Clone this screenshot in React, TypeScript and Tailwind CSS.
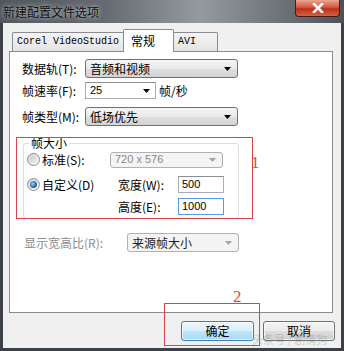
import React from "react";

function Arrow({ color = "#000" }: { color?: string }) {
  return (
    <svg width="7" height="4" viewBox="0 0 7 4" className="shrink-0">
      <path d="M0 0H7L3.5 4Z" fill={color} />
    </svg>
  );
}

function Combo({ className, children }: { className: string; children: React.ReactNode }) {
  return <div className={className}>{children}</div>;
}

function Radio({ checked }: { checked?: boolean }) {
  return (
    <div className="w-[13px] h-[13px] shrink-0 rounded-full border border-[#8e8f8f] bg-[linear-gradient(135deg,#d0d0d0,#fbfbfb)] flex items-center justify-center">
      {checked ? (
        <div className="w-[7px] h-[7px] rounded-full bg-[radial-gradient(circle_at_40%_40%,#9fd4f7,#2a6cab_55%,#1b4f82)]" />
      ) : (
        <div className="w-[7px] h-[7px] rounded-full bg-[linear-gradient(135deg,#c9c9c9,#f2f2f2)]" />
      )}
    </div>
  );
}

export default function App() {
  return (
    <div className="relative w-[344px] h-[351px] overflow-hidden bg-[#3b4147] flex flex-col font-['Noto_Sans_CJK_SC',sans-serif] text-[12px] text-black leading-none">
      {/* title bar */}
      <div className="h-[23px] shrink-0 flex items-center pl-[3px] bg-[linear-gradient(90deg,#50565c_0%,#646a70_30%,#959aa0_58%,#6c7278_82%,#4c5258_100%)]">
        <span className="text-[12px] leading-none text-[#111] [text-shadow:0_0_5px_rgba(255,255,255,0.85)]">
          新建配置文件选项
        </span>
      </div>

      {/* body */}
      <div className="mx-[3px] mb-[3px] flex-1 bg-[#f0f0f0] flex flex-col pt-[6px]">
        <div className="ml-[6px] w-[324px] flex flex-col">
          {/* tabs */}
          <div className="flex items-end h-[22px] pl-[3px]">
            <div className="w-[111px] h-[19px] border-t border-l border-[#898c95] rounded-tl-[2px] bg-[linear-gradient(#f5f5f5,#e4e4e4)] flex items-center pl-[4px] font-['Liberation_Mono',monospace] text-[10px]">
              Corel VideoStudio
            </div>
            <div className="relative z-10 -mb-px w-[51px] h-[23px] border-t border-l border-r border-[#898c95] rounded-t-[2px] bg-white flex items-center pl-[7px] pb-[1px]">
              常规
            </div>
            <div className="w-[44px] h-[19px] border-t border-r border-[#898c95] rounded-tr-[2px] bg-[linear-gradient(#f5f5f5,#e4e4e4)] flex items-center pl-[4px] font-['Liberation_Mono',monospace] text-[10px]">
              AVI
            </div>
          </div>

          {/* panel */}
          <div className="h-[262px] border border-[#898c95] bg-white flex flex-col pt-[7px]">
            <div className="flex items-center h-[19px] pl-[12px]">
              <span className="w-[63px]">数据轨(T):</span>
              <Combo className="w-[153px] h-[19px] rounded-[3px] border border-[#707070] bg-[linear-gradient(#f6f6f6,#e9e9e9_50%,#dedede_52%,#d3d3d3)] flex items-center justify-between pl-[4px] pr-[6px]">
                <span>音频和视频</span>
                <Arrow />
              </Combo>
            </div>
            <div className="flex items-center h-[19px] mt-[3px] pl-[12px]">
              <span className="w-[63px]">帧速率(F):</span>
              <div className="w-[71px] h-[17px] border border-[#abadb3] border-t-[#8e8f8f] bg-white flex items-center justify-between pl-[4px] pr-[5px]">
                <span className="font-['Liberation_Sans',sans-serif] text-[11px]">25</span>
                <Arrow />
              </div>
              <span className="ml-[3px]">帧/秒</span>
            </div>
            <div className="flex items-center h-[19px] mt-[7px] pl-[12px]">
              <span className="w-[63px]">帧类型(M):</span>
              <Combo className="w-[153px] h-[19px] rounded-[3px] border border-[#707070] bg-[linear-gradient(#f6f6f6,#e9e9e9_50%,#dedede_52%,#d3d3d3)] flex items-center justify-between pl-[4px] pr-[6px]">
                <span>低场优先</span>
                <Arrow />
              </Combo>
            </div>

            {/* group box */}
            <fieldset className="ml-[13px] mt-[9px] w-[216px] h-[84px] border border-[#d5dfe5] rounded-[3px] flex flex-col">
              <legend className="ml-[5px] px-[2px] leading-[16px]">帧大小</legend>
              <div className="flex items-center h-[17px] pl-[3px]">
                <Radio />
                <span className="ml-[2px] w-[68px]">标准(S):</span>
                <Combo className="w-[113px] h-[16px] rounded-[3px] border border-[#adb2b5] bg-[#f4f4f4] flex items-center justify-between pl-[4px] pr-[6px]">
                  <span className="font-['Liberation_Sans',sans-serif] text-[11px] text-[#8a8a8a]">720 x 576</span>
                  <Arrow color="#a5a5a5" />
                </Combo>
              </div>
              <div className="flex items-center h-[17px] pl-[3px] mt-[8px]">
                <Radio checked />
                <span className="ml-[2px] w-[76px]">自定义(D)</span>
                <span className="w-[60px]">宽度(W):</span>
                <div className="w-[46px] h-[17px] border border-[#abadb3] border-t-[#8e8f8f] bg-white flex items-center pl-[3px]">
                  <span className="font-['Liberation_Sans',sans-serif] text-[11px]">500</span>
                </div>
              </div>
              <div className="flex items-center h-[17px] pl-[94px] mt-[5px]">
                <span className="w-[60px]">高度(E):</span>
                <div className="w-[46px] h-[17px] border border-[#569de5] bg-white flex items-center pl-[3px]">
                  <span className="font-['Liberation_Sans',sans-serif] text-[11px]">1000</span>
                </div>
              </div>
            </fieldset>

            <div className="flex items-center h-[19px] mt-[14px] pl-[14px]">
              <span className="w-[103px] text-[#8d8d8d]">显示宽高比(R):</span>
              <Combo className="w-[112px] h-[19px] rounded-[3px] border border-[#adb2b5] bg-[#f4f4f4] flex items-center justify-between pl-[4px] pr-[6px]">
                <span className="text-[#222]">来源帧大小</span>
                <Arrow color="#a5a5a5" />
              </Combo>
            </div>
          </div>
        </div>

        {/* buttons */}
        <div className="flex justify-end gap-[9px] pr-[6px] mt-[8px]">
          <div className="w-[73px] h-[20px] rounded-[3px] border border-[#3c7fb1] bg-[linear-gradient(#eaf6fd,#d9f0fc_50%,#bee6fd_52%,#a7d9f5)] shadow-[inset_0_0_0_1px_rgba(255,255,255,0.7)] flex items-center justify-center">
            确定
          </div>
          <div className="w-[72px] h-[20px] rounded-[3px] border border-[#707070] bg-[linear-gradient(#f2f2f2,#ebebeb_50%,#dddddd_52%,#cfcfcf)] shadow-[inset_0_0_0_1px_rgba(255,255,255,0.7)] flex items-center justify-center">
            取消
          </div>
        </div>
      </div>

      {/* close button */}
      <div className="absolute left-[295px] top-0 w-[45px] h-[17px] rounded-b-[4px] border border-t-0 border-[#4a1a14] bg-[linear-gradient(#e9a594,#d4573f_45%,#bd2f1b_55%,#d7613f)] flex items-center justify-center">
        <svg width="12" height="10" viewBox="0 0 12 10">
          <path d="M2 1L10 9M10 1L2 9" stroke="#fff" strokeWidth="2.6" strokeLinecap="square" />
        </svg>
      </div>

      {/* annotations */}
      <div className="absolute left-[16px] top-[137px] w-[237px] h-[82px] border border-[#d8434f]" />
      <span className="absolute left-[251px] top-[154px] font-['Liberation_Serif',serif] text-[17px] leading-none text-[#e0483e]">1</span>
      <div className="absolute left-[164px] top-[303px] w-[96px] h-[43px] border border-[#d8434f]" />
      <span className="absolute left-[233px] top-[288px] font-['Liberation_Serif',serif] text-[17px] leading-none text-[#e0483e]">2</span>

      {/* watermark */}
      <span className="absolute left-[252px] top-[334px] text-[11px] leading-none text-[rgba(150,150,150,0.45)]">头条号 / 剧情狗</span>
    </div>
  );
}
